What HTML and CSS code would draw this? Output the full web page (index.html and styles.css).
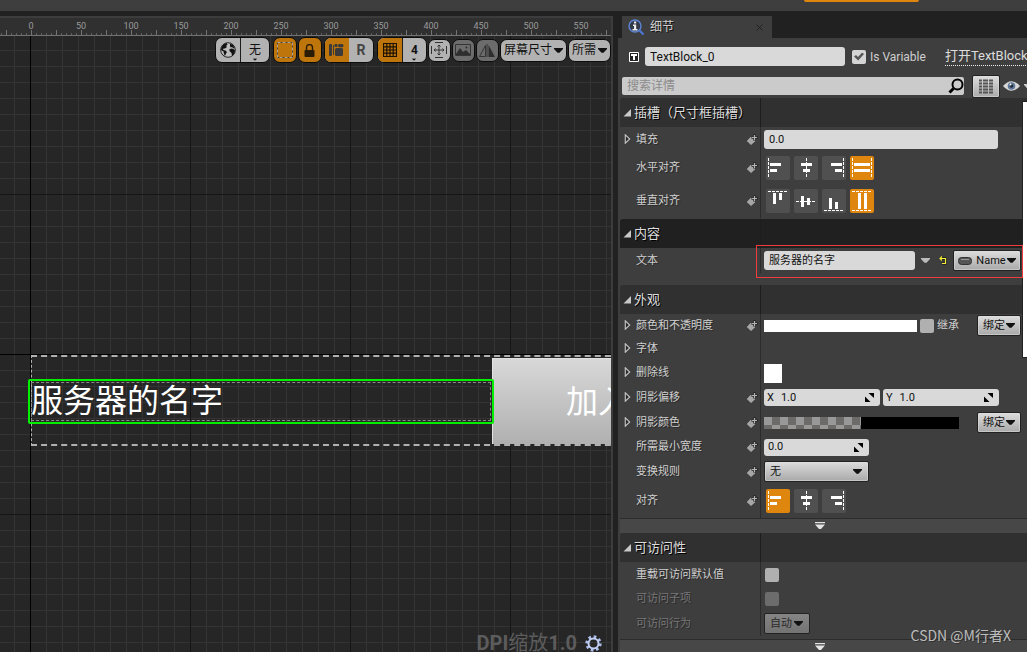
FILE: index.html
```html
<!DOCTYPE html>
<html lang="zh-CN">
<head>
<meta charset="utf-8">
<title>TextBlock_0</title>
<link rel="stylesheet" href="styles.css">
</head>
<body>
<svg class="defs" aria-hidden="true">
  <symbol id="key" viewBox="0 0 12 12"><path d="M5 2 10 7 5 11.500 .3 7z" fill="#a6a6a6" stroke="#222" stroke-width=".6"/><path d="M8.500 0v6.500M5.500 3.500H12" stroke="#2a2a2a" stroke-width="2.600"/><path d="M8.500 1v5M6 3.500h5" stroke="#b4b4b4" stroke-width="1.200"/></symbol>
  <symbol id="closed" viewBox="0 0 6 9"><path d="M1 .7v7.600l4-3.800z" fill="#2c2c2c" stroke="#c4c4c4" stroke-width="1"/></symbol>
  <symbol id="open" viewBox="0 0 8 8"><path d="M8 0v7.500H.5z" fill="#c8c8c8"/></symbol>
  <symbol id="down" viewBox="0 0 9 5"><path d="M0 0h9v1L5.500 4.700h-2L0 1z" fill="currentColor"/></symbol>
  <symbol id="more" viewBox="0 0 10 8"><path d="M0 0h10v1.300H0zM0 2.500h10L6 7H4z" fill="#e4e4e4"/></symbol>
  <symbol id="spin" viewBox="0 0 9 9"><path d="M3.500 0H9v5zM0 3.500 5.500 9H0z" fill="#000"/><path d="m3 2.500 3.500 3.500" stroke="#d9d9d9" stroke-width="1.500"/></symbol>
  <symbol id="h-left" viewBox="0 0 24 24"><path d="M2.500 2v20" stroke="#fff" stroke-dasharray="3 1"/><path d="M4 7h11v3H4zM4 13h7v3H4z" fill="#fff"/></symbol>
  <symbol id="h-center" viewBox="0 0 24 24"><path d="M12.500 2v20" stroke="#fff" stroke-dasharray="3 1"/><path d="M7 7h11v3H7zM9 13h7v3H9z" fill="#fff"/></symbol>
  <symbol id="h-right" viewBox="0 0 24 24"><path d="M21.500 2v20" stroke="#fff" stroke-dasharray="3 1"/><path d="M9 7h11v3H9zM13 13h7v3h-7z" fill="#fff"/></symbol>
  <symbol id="h-fill" viewBox="0 0 24 24"><path d="M2.500 2v20M21.500 2v20" stroke="#fff" stroke-dasharray="3 1"/><path d="M4 7h16v3H4zM4 13h16v3H4z" fill="#fff"/></symbol>
  <symbol id="v-top" viewBox="0 0 24 24"><path d="M2 2.500h20" stroke="#fff" stroke-dasharray="3 1"/><path d="M7 4h3v11H7zM13 4h3v7h-3z" fill="#fff"/></symbol>
  <symbol id="v-center" viewBox="0 0 24 24"><path d="M2 12.500h20" stroke="#fff" stroke-dasharray="3 1"/><path d="M7 7h3v11H7zM13 9h3v7h-3z" fill="#fff"/></symbol>
  <symbol id="v-bottom" viewBox="0 0 24 24"><path d="M2 21.500h20" stroke="#fff" stroke-dasharray="3 1"/><path d="M7 9h3v11H7zM13 13h3v7h-3z" fill="#fff"/></symbol>
  <symbol id="v-fill" viewBox="0 0 24 24"><path d="M2 2.500h20M2 21.500h20" stroke="#fff" stroke-dasharray="3 1"/><path d="M8 4h3v16H8zM14 4h3v16h-3z" fill="#fff"/></symbol>
</svg>

<div class="topbar"><span class="topbar-accent"></span></div>
<div class="workspace">
  <main class="designer">
    <div class="ruler">
      <span>0</span><span>50</span><span>100</span><span>150</span><span>200</span><span>250</span><span>300</span><span>350</span><span>400</span><span>450</span><span>500</span><span>550</span>
    </div>
    <div class="surface">
      <div class="axis axis-x"></div>
      <div class="axis axis-y"></div>
      <div class="row-widget"></div>
      <div class="button-widget">加入</div>
      <div class="text-widget">服务器的名字</div>

      <div class="tools">
        <div class="group tall">
          <button class="seg" aria-label="本地化预览"><svg width="16" height="16" viewBox="0 0 16 16"><circle cx="8" cy="8" r="7.300" fill="#bdbdbd" stroke="#222" stroke-width="1"/><path d="M1.500 5 3.500 2.500 6.500 1l1 1.500L6 4l1 1-2 1.500H3.500L3 8l2.500.5L7 10l-1 1.500L5 14l-1-2-.5-2.500L1 8zM10 1.500 13 3l1.500 3-1 .5L12 5l-1.500.5-.5-2zM9.500 7 12 6.500l3 1.500-.5 3-2.500 3-.5-3L9.500 9z" fill="#111"/></svg></button>
          <button class="seg seg-none"><span>无</span><svg width="4" height="3" viewBox="0 0 8 5"><use href="#down"/></svg></button>
        </div>
        <button class="group tall on dashed-tool" aria-label="显示虚线轮廓"><svg width="16" height="16" viewBox="0 0 16 16"><path d="M.5.5h15v15H.5z" fill="none" stroke="#4c3d28"/><path d="M.5.5h15v15H.5z" fill="none" stroke="#a9a29a" stroke-dasharray="3 2"/></svg></button>
        <button class="group tall on lock-tool" aria-label="锁定"><svg width="11" height="13" viewBox="0 0 11 13"><path d="M2.500 6V3.500a3 3 0 0 1 6 0V6" fill="none" stroke="#2b1c06" stroke-width="1.400"/><rect x=".5" y="6" width="10" height="7" rx="1" fill="#2b1c06"/></svg></button>
        <div class="group tall layout-group">
          <button class="seg on" aria-label="布局变换"><svg width="15" height="12" viewBox="0 0 15 12"><rect width="3" height="12" rx="1" fill="#3a3a3a"/><path d="M4 1h1v10H4z" fill="#3a3a3a"/><rect x="6" y="4" width="8" height="8" rx="1.500" fill="#3a3a3a"/><rect x="5.500" width="3" height="3" rx="1" fill="#3a3a3a"/><rect x="9" y="0" width="5.500" height="3.200" rx="1.500" fill="#3a3a3a"/></svg></button>
          <button class="seg letter">R</button>
        </div>
        <div class="group tall grid-group">
          <button class="seg on" aria-label="网格对齐"><svg width="14" height="14" viewBox="0 0 14 14"><path d="M.5.5h13v13H.5zM3.800 0v14M7 0v14M10.200 0v14M0 3.800h14M0 7h14M0 10.200h14" fill="none" stroke="#1d1202" stroke-width="1.200"/></svg></button>
          <button class="seg snap"><span>4</span><svg width="4" height="3" viewBox="0 0 8 5"><use href="#down"/></svg></button>
        </div>
        <button class="group short" aria-label="缩放以适应"><svg width="16" height="16" viewBox="0 0 16 16"><path d="M4 .5h8M4 15.500h8M.5 4v8M15.500 4v8M8 3v10M3 8h10M6.500 4.500 8 3l1.500 1.500M6.500 11.500 8 13l1.500-1.500M4.500 6.500 3 8l1.500 1.500M11.500 6.500 13 8l-1.500 1.500" fill="none" stroke="#333"/></svg></button>
        <button class="group short dim" aria-label="图像"><svg width="16" height="12" viewBox="0 0 16 12"><path d="M.5.5h15v11H.5z" fill="none" stroke="#353535"/><path d="M1 10 5 4l3 4 3-2 4 4v1H1z" fill="#2e2e2e"/><circle cx="11.500" cy="3.500" r="1" fill="#2e2e2e"/></svg></button>
        <button class="group short dim" aria-label="镜像"><svg width="16" height="13" viewBox="0 0 16 13"><path d="M6.500 1.500v11h-6zM8 0v13" fill="none" stroke="#353535"/><path d="M9.500 1v12H16z" fill="#2e2e2e"/></svg></button>
        <button class="group short drop">屏幕尺寸<svg width="9" height="5"><use href="#down"/></svg></button>
        <button class="group short drop">所需<svg width="9" height="5"><use href="#down"/></svg></button>
      </div>

      <div class="dpi"><span><b>DPI</b>缩放<b>1.0</b></span>
        <button class="gear" aria-label="DPI 设置"><svg width="17" height="17" viewBox="0 0 17 17"><circle cx="8.500" cy="8.500" r="6.700" fill="none" stroke="#aebfee" stroke-width="3" stroke-dasharray="2.600 2.660"/><circle cx="8.500" cy="8.500" r="5" fill="none" stroke="#c3cff5" stroke-width="2"/></svg></button>
      </div>
    </div>
  </main>

  <aside class="side">
    <div class="tab">
      <svg width="17" height="17" viewBox="0 0 17 17"><path d="m11 11 4.500 4.500" stroke="#4a74cc" stroke-width="2.400"/><circle cx="7" cy="7" r="6" fill="#343a48" stroke="#5d85d6" stroke-width="1.400"/><path d="M6 2.500h2.200v2H6zM5 5.500h3.200v4.500H9.500v1.500h-5V10H6V7H5z" fill="#eee"/></svg>
      <span>细节</span>
      <button class="close" aria-label="关闭"><svg width="7" height="7" viewBox="0 0 7 7"><path d="m.5.5 6 6m0-6-6 6" stroke="#222"/></svg></button>
    </div>
    <div class="panel">
      <div class="identity">
        <svg width="10" height="10" viewBox="0 0 10 10"><path d="M.5.5h9v9h-9z" fill="#222" stroke="#fff"/><path d="M2 2h6v2H6v4H4V4H2z" fill="#fff"/></svg>
        <input class="field name" type="text" value="TextBlock_0" aria-label="名称">
        <label class="variable"><input class="check" type="checkbox" checked>Is Variable</label>
        <a class="open-link" href="#">打开TextBlock</a>
      </div>
      <div class="searchbar">
        <div class="search"><input type="text" placeholder="搜索详情" aria-label="搜索详情"><svg width="16" height="16" viewBox="0 0 16 16"><circle cx="9.500" cy="6.500" r="5" fill="none" stroke="#000" stroke-width="2"/><path d="M5.500 10.500 1.500 14.500" stroke="#000" stroke-width="3"/></svg></div>
        <button class="btn matrix" aria-label="属性矩阵"><svg width="14" height="15" viewBox="0 0 14 15"><path d="M0 1.500h14M0 4.500h14M0 7.500h14M0 10.500h14M0 13.500h14" stroke="#555" stroke-width="2" stroke-dasharray="3 1 5 1 4 0"/></svg></button>
        <button class="eye" aria-label="视图选项"><svg width="17" height="12" viewBox="0 0 17 12"><path d="M0 6Q8.500-3.500 17 6 8.500 15.500 0 6z" fill="#d8d8d8"/><circle cx="8.500" cy="6" r="3.800" fill="#5f7898"/><circle cx="8.500" cy="6" r="1.800" fill="#202a3a"/><circle cx="7.500" cy="4.500" r="1" fill="#fff"/></svg><svg width="9" height="5"><use href="#down"/></svg></button>
      </div>

      <div class="details">
        <section>
          <h2 class="head"><span><svg width="8" height="8"><use href="#open"/></svg>插槽（尺寸框插槽）</span></h2>
          <div class="row h25"><div class="label"><svg class="fold" width="7" height="10"><use href="#closed"/></svg><label for="pad">填充</label><svg class="key" width="12" height="12"><use href="#key"/></svg></div><div class="value"><input id="pad" class="field wide" type="text" value="0.0"></div></div>
          <div class="row h32"><div class="label">水平对齐<svg class="key" width="12" height="12"><use href="#key"/></svg></div><div class="value aligns">
            <button aria-label="左对齐"><svg width="24" height="24"><use href="#h-left"/></svg></button><button aria-label="居中"><svg width="24" height="24"><use href="#h-center"/></svg></button><button aria-label="右对齐"><svg width="24" height="24"><use href="#h-right"/></svg></button><button class="active" aria-label="填充"><svg width="24" height="24"><use href="#h-fill"/></svg></button></div></div>
          <div class="row h34"><div class="label">垂直对齐<svg class="key" width="12" height="12"><use href="#key"/></svg></div><div class="value aligns">
            <button aria-label="顶部对齐"><svg width="24" height="24"><use href="#v-top"/></svg></button><button aria-label="居中"><svg width="24" height="24"><use href="#v-center"/></svg></button><button aria-label="底部对齐"><svg width="24" height="24"><use href="#v-bottom"/></svg></button><button class="active" aria-label="填充"><svg width="24" height="24"><use href="#v-fill"/></svg></button></div></div>
        </section>

        <section>
          <h2 class="head hover"><span><svg width="8" height="8"><use href="#open"/></svg>内容</span></h2>
          <div class="row h25 marked"><div class="label"><label for="text">文本</label></div><div class="value"><input id="text" class="field text" type="text" value="服务器的名字">
            <button class="plain" aria-label="本地化选项"><svg width="9" height="5"><use href="#down"/></svg></button>
            <button class="plain reset" aria-label="重置"><svg width="8" height="9" viewBox="0 0 8 9"><path d="M1.500 2.500h5v5H3M3.500.5l-2 2 2 2" fill="none" stroke="#111" stroke-width="2"/><path d="M1 2.500h5.500v5H3M3 .5l-2 2 2 2" fill="none" stroke="#f2ee3a" stroke-width="1.200"/></svg></button>
            <button class="btn bind-name"><svg width="14" height="8" viewBox="0 0 14 8"><rect x=".5" y=".5" width="13" height="7" rx="3" fill="#555" stroke="#333"/><path d="M3 2.500h8" stroke="#999"/></svg><span>Name</span><svg width="9" height="5"><use href="#down"/></svg></button></div></div>
          <div class="spacer"></div>
        </section>

        <section>
          <h2 class="head"><span><svg width="8" height="8"><use href="#open"/></svg>外观</span></h2>
          <div class="row h23"><div class="label"><svg class="fold" width="7" height="10"><use href="#closed"/></svg>颜色和不透明度<svg class="key" width="12" height="12"><use href="#key"/></svg></div><div class="value"><button class="color" aria-label="颜色"></button><label class="inherit"><input class="check" type="checkbox">继承</label><button class="btn bind">绑定<svg width="9" height="5"><use href="#down"/></svg></button></div></div>
          <div class="row h24"><div class="label"><svg class="fold" width="7" height="10"><use href="#closed"/></svg>字体</div><div class="value"></div></div>
          <div class="row h24"><div class="label"><svg class="fold" width="7" height="10"><use href="#closed"/></svg>删除线</div><div class="value"><button class="swatch" aria-label="删除线画刷"></button></div></div>
          <div class="row h25"><div class="label"><svg class="fold" width="7" height="10"><use href="#closed"/></svg>阴影偏移<svg class="key" width="12" height="12"><use href="#key"/></svg></div><div class="value pair"><label class="spin">X<input type="text" value="1.0"><svg width="9" height="9"><use href="#spin"/></svg></label><label class="spin">Y<input type="text" value="1.0"><svg width="9" height="9"><use href="#spin"/></svg></label></div></div>
          <div class="row h25"><div class="label"><svg class="fold" width="7" height="10"><use href="#closed"/></svg>阴影颜色<svg class="key" width="12" height="12"><use href="#key"/></svg></div><div class="value"><button class="shadow" aria-label="阴影颜色"><span></span></button><button class="btn bind">绑定<svg width="9" height="5"><use href="#down"/></svg></button></div></div>
          <div class="row h24"><div class="label"><label for="minw">所需最小宽度</label><svg class="key" width="12" height="12"><use href="#key"/></svg></div><div class="value"><div class="spin single"><input id="minw" type="text" value="0.0"><svg width="9" height="9"><use href="#spin"/></svg></div></div></div>
          <div class="row h25"><div class="label"><label for="rule">变换规则</label><svg class="key" width="12" height="12"><use href="#key"/></svg></div><div class="value"><div class="combo"><select id="rule" class="btn"><option>无</option></select><svg width="9" height="5"><use href="#down"/></svg></div></div></div>
          <div class="row h34"><div class="label">对齐<svg class="key" width="12" height="12"><use href="#key"/></svg></div><div class="value aligns"><button class="active" aria-label="左对齐"><svg width="24" height="24"><use href="#h-left"/></svg></button><button aria-label="居中"><svg width="24" height="24"><use href="#h-center"/></svg></button><button aria-label="右对齐"><svg width="24" height="24"><use href="#h-right"/></svg></button></div></div>
          <button class="expand" aria-label="显示高级"><svg width="10" height="8"><use href="#more"/></svg></button>
        </section>

        <section class="access">
          <h2 class="head"><span><svg width="8" height="8"><use href="#open"/></svg>可访问性</span></h2>
          <div class="row h25"><div class="label"><label for="override">重载可访问默认值</label></div><div class="value"><input id="override" class="check inset" type="checkbox"></div></div>
          <div class="row h24 off"><div class="label"><label for="children">可访问子项</label></div><div class="value"><input id="children" class="check inset" type="checkbox" disabled></div></div>
          <div class="row h25 off"><div class="label"><label for="behavior">可访问行为</label></div><div class="value"><div class="combo auto"><select id="behavior" class="btn" disabled><option>自动</option></select><svg width="9" height="5"><use href="#down"/></svg></div></div></div>
          <div class="gap"></div>
          <button class="expand" aria-label="显示高级"><svg width="10" height="8"><use href="#more"/></svg></button>
        </section>
        <div class="scroll-thumb"></div>
      </div>
    </div>
  </aside>
</div>
<div class="watermark">CSDN @M行者X</div>
</body>
</html>
```

FILE: styles.css
```css
* { box-sizing: border-box; }

body {
  margin: 0;
  height: 100vh;
  display: flex;
  flex-direction: column;
  overflow: hidden;
  position: relative;
  background: #212121;
  color: #cfcfcf;
  font: 11px/16px Roboto, "Noto Sans CJK SC", sans-serif;
}

button, input, select { font: inherit; color: inherit; margin: 0; padding: 0; border: 0; }
button { background: none; display: flex; align-items: center; justify-content: center; }
svg { display: block; flex: none; }
.defs { position: absolute; width: 0; height: 0; }

.topbar { flex: none; height: 11px; background: #3e3e3e; display: flex; justify-content: flex-end; padding-right: 108px; }
.topbar-accent { width: 115px; height: 2px; background: #de860e; border-radius: 0 0 2px 2px; }

.workspace { flex: 1; min-height: 0; display: flex; gap: 5px; padding-top: 5px; }

/* Designer */
.designer {
  flex: 1;
  min-width: 0;
  display: flex;
  flex-direction: column;
  border: solid #3c3c3c;
  border-width: 2px 2px 0 0;
  overflow: hidden;
}

.ruler {
  flex: none;
  height: 18px;
  display: flex;
  padding-left: 6px;
  overflow: hidden;
  border-bottom: 1px solid #737373;
  color: #9a9a9a;
  font-size: 9px;
  line-height: 16px;
  text-align: center;
  background:
    repeating-linear-gradient(90deg, #737373 0 1px, transparent 1px 25px) 6px 100% / 100% 5px no-repeat,
    repeating-linear-gradient(90deg, #5e5e5e 0 1px, transparent 1px 5px) 1px 100% / 100% 2px no-repeat,
    #303030;
}
.ruler span { flex: 0 0 50px; }

.surface {
  flex: 1;
  min-height: 0;
  position: relative;
  overflow: hidden;
  background:
    linear-gradient(90deg, #161616 1px, transparent 1px) 30px 0 / 160px 160px,
    linear-gradient(#161616 1px, transparent 1px) 0 158px / 160px 160px,
    linear-gradient(90deg, #343434 1px, transparent 1px) 14px 0 / 16px 16px,
    linear-gradient(#343434 1px, transparent 1px) 0 14px / 16px 16px,
    #262626;
}
.axis { position: absolute; background: #000; }
.axis-x { left: 0; right: 0; top: 318px; height: 1px; }
.axis-y { top: 0; bottom: 0; left: 30px; width: 1px; }

.row-widget {
  position: absolute;
  left: 31px;
  right: -20px;
  top: 319px;
  height: 91px;
  border: 1px dashed #b0b0b0;
  border-width: 2px 1px;
}
.button-widget {
  position: absolute;
  left: 492px;
  top: 322px;
  width: 212px;
  height: 86px;
  border: 1px solid #e2e2e2;
  border-bottom: 0;
  background: linear-gradient(#d8d8d8, #b0b0b0);
  color: #fff;
  font-size: 32px;
  line-height: 86px;
  text-align: center;
}
.text-widget {
  position: absolute;
  left: 28px;
  top: 343px;
  width: 466px;
  height: 45px;
  border: 2px solid #00f000;
  border-radius: 2px;
  outline: 1px dashed #8a8a8a;
  outline-offset: -4px;
  padding-left: 1px;
  color: #fff;
  font-size: 32px;
  line-height: 41px;
  white-space: nowrap;
}

.tools {
  position: absolute;
  top: 1px;
  right: 0;
  display: flex;
  align-items: center;
  gap: 1px;
  color: #111;
}
.group { display: flex; background: #b2b2b2; border: 1px solid #0c0c0c; border-radius: 7px; overflow: hidden; }
.tall { height: 26px; margin-right: 2px; }
.short { height: 23px; width: 23px; }
.seg { width: 24px; flex-direction: column; }
.seg + .seg { border-left: 1px solid #1c1c1c; }
.seg-none, .seg.snap { width: 29px; padding-top: 2px; }
.seg.snap { width: 24px; }
.seg-none { font-size: 12px; }
.snap, .letter { font-size: 12px; font-weight: 700; }
.seg.letter { color: #444; font-size: 14px; }
.layout-group .letter { border-left: 0; }
.on { background: #bd750c; }
.dashed-tool { width: 24px; margin-right: 0; }
.lock-tool { width: 24px; margin-right: 1px; }
.grid-group { margin-right: 0; }
.dim { background: #6c6c6c; }
.drop { width: auto; padding: 0 3px; gap: 2px; font-size: 12px; }

.dpi {
  position: absolute;
  right: 9px;
  bottom: 0;
  display: flex;
  align-items: center;
  gap: 8px;
  color: #5c5c5c;
  font-size: 20px;
  line-height: 18px;
}

/* Details */
.side { flex: 0 0 409px; display: flex; flex-direction: column; min-height: 0; overflow: hidden; }
.tab {
  flex: none;
  align-self: flex-start;
  width: 150px;
  height: 22px;
  margin-left: 4px;
  padding: 0 9px 0 6px;
  display: flex;
  align-items: center;
  gap: 5px;
  background: #3e3e3e;
  font-size: 12px;
  text-shadow: 1px 1px #111;
}
.close { margin-left: auto; }
.panel { flex: 1; min-height: 0; background: #3e3e3e; display: flex; flex-direction: column; padding-left: 2px; }

.field { height: 19px; border-radius: 3px; background: #d9d9d9; color: #111; padding: 0 5px; }
.identity {
  flex: none;
  height: 37px;
  display: flex;
  align-items: center;
  padding-left: 9px;
  font-size: 12px;
  white-space: nowrap;
}
.name { width: 200px; margin: 0 7px 0 6px; flex: none; }
.variable { display: flex; align-items: center; gap: 4px; margin-right: 19px; }
.open-link { color: #ddd; font-size: 13px; line-height: 18px; text-decoration: none; border-bottom: 1px dotted #eee; }

.check { appearance: none; flex: none; width: 14px; height: 14px; border-radius: 2px; background: #b0b0b0; }
.check:checked {
  background: #d4d4d4;
  display: grid;
  place-items: center;
}
.check:checked::before { content: ""; width: 10px; height: 8px; background: #555; clip-path: polygon(0 50%, 20% 32%, 40% 55%, 82% 0, 100% 18%, 42% 100%); }
.check.inset { margin-left: 1px; }

.searchbar { flex: none; height: 22px; margin-bottom: 1px; display: flex; align-items: center; padding-left: 2px; }
.search { width: 342px; height: 18px; flex: none; display: flex; align-items: center; padding: 0 0 0 5px; background: #cbcbcb; border-radius: 2px; }
.search input { flex: 1; min-width: 0; background: none; color: #111; font-size: 12px; }
.search input::placeholder { color: #8b8b8b; opacity: 1; }
.btn {
  height: 21px;
  border: 1px solid #222;
  border-radius: 2px;
  background: linear-gradient(#dcdcdc, #a9a9a9);
  box-shadow: inset 0 0 0 1px #e0e0e088;
  color: #111;
}
.matrix { width: 28px; height: 23px; margin-left: 8px; flex: none; }
.eye { margin-left: 3px; gap: 4px; flex: none; }

.details { flex: 1; min-height: 0; overflow: hidden; position: relative; }
.head { margin: 0; height: 29px; background: #303030; color: #ddd; font-size: 13px; font-weight: 400; display: flex; text-shadow: 1px 1px #000; border-radius: 3px 0 0; }
.head span { width: 141px; border-right: 1px solid #1d1d1d; display: flex; align-items: center; gap: 3px; padding-left: 3px; white-space: nowrap; }
.head.hover { background: #202020; }
.row { display: grid; grid-template-columns: 141px 1fr; position: relative; }
.label { position: relative; display: flex; align-items: center; padding-left: 16px; border-right: 1px solid #2b2b2b; text-shadow: 1px 1px #2a2a2a; white-space: nowrap; }
.fold { position: absolute; left: 4px; top: calc(50% - 6px); }
.key { margin: 0 2px 0 auto; }
.value { display: flex; align-items: center; padding-left: 3px; min-width: 0; }
.h23 { height: 23px; }
.h24 { height: 24px; }
.h25 { height: 25px; }
.h32 { height: 32px; }
.h34 { height: 34px; }
.spacer { height: 12px; }
.gap { height: 3px; }
section:first-child { padding-bottom: 1px; }

.wide { width: 234px; }
.aligns { gap: 4px; padding-left: 5px; }
.aligns button { background: #505050; border-radius: 2px; }
.aligns .active { background: #de860e; }

.marked::after { content: ""; position: absolute; z-index: 2; pointer-events: none; left: 136px; right: 4px; top: -3px; height: 31px; border: 1px solid #f03c3c; }
.text { width: 151px; padding-bottom: 3px; }
.plain { margin-left: 6px; color: #bbb; }
.reset { margin-left: 9px; }
.bind-name { margin-left: 6px; width: 68px; gap: 1px; }
.bind-name span { margin-left: 3px; }
.color { width: 153px; height: 12px; background: #fff; }
.inherit { display: flex; align-items: center; gap: 3px; margin-left: 3px; }
.bind { width: 44px; margin: 0 6px 0 auto; gap: 1px; }
.swatch { width: 18px; height: 19px; background: #fff; }
.pair { gap: 3px; }
.spin { width: 116px; height: 17px; display: flex; align-items: center; gap: 7px; padding: 0 6px 0 3px; border-radius: 3px; background: #d9d9d9; color: #111; }
.spin input { flex: 1; min-width: 0; background: none; }
.single { width: 105px; padding-left: 4px; }
.shadow { width: 195px; height: 12px; background: repeating-conic-gradient(#6d6a6a 0 25%, #989898 0 50%) 0 0 / 16px 16px; justify-content: flex-end; }
.shadow span { width: 98px; height: 12px; background: #000; }
.combo { position: relative; width: 105px; color: #111; }
.combo select { appearance: none; width: 100%; padding: 0 5px; display: block; }
.combo svg { position: absolute; right: 7px; top: 8px; pointer-events: none; }
.auto { width: 46px; }
.off .label { color: #777; }
.off .check { background: #6c6c6c; }
.off .btn { background: linear-gradient(#858585, #737373); box-shadow: none; opacity: 1; color: #2b2b2b; }

.expand { width: 100%; height: 15px; padding-right: 8px; border-top: 1px solid #2c2c2c; background: #474747; }
.scroll-thumb { position: absolute; top: 3px; right: 0; width: 5px; height: 257px; background: #fff; border: 1px solid #222; border-right: 0; }

.watermark { position: absolute; right: 16px; bottom: 6px; color: #bdbdbd; font: 14px/22px "Noto Sans CJK SC", sans-serif; text-shadow: 1px 1px #333; }
```
